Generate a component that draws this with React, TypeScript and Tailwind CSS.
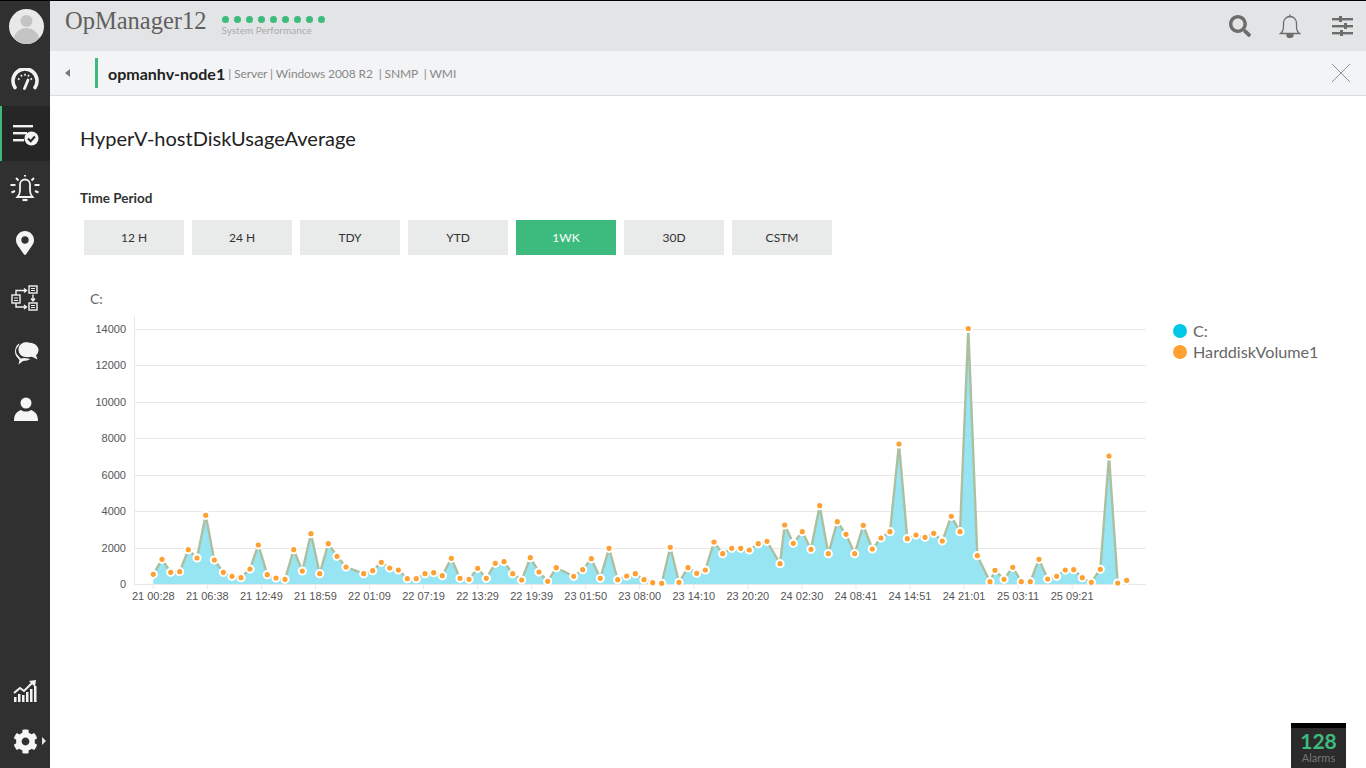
import { FaCog, FaMapMarkerAlt, FaSearch } from "react-icons/fa";

// [x, y] of each sample in page pixels, the svg viewBox starts at 90,310
const points: [number, number][] = [
  [153.3, 574.3], [162, 559.3], [170.7, 572.3], [179.7, 571.7], [188.3, 549.7], [197, 558], [205.7, 515.3], [214.3, 560],
  [223.3, 572.3], [232, 576.3], [241, 577.7], [250, 569], [258.3, 545], [267.3, 574.7], [276, 578], [285, 579.3],
  [293.7, 549.7], [302.3, 571], [311, 533.7], [319.7, 573.7], [328.3, 543.7], [337, 556.3], [346, 567], [363.7, 573.7],
  [372.7, 570.7], [381.3, 562.3], [389.7, 568], [398.3, 570], [407.3, 578.7], [416.3, 578.7], [425, 573.7], [433.7, 572.7],
  [442.3, 575.7], [451.3, 558.3], [460, 578.3], [469, 579.3], [477.7, 568.3], [486.3, 578.3], [495.3, 563.3], [504, 561.7],
  [512.7, 573.7], [521.7, 580], [530.3, 557.7], [539, 572], [547.7, 581.3], [556.3, 567.7], [573.7, 576.3], [582.7, 569.7],
  [591.3, 558.7], [600.3, 578.3], [609, 548.3], [617.7, 579.7], [626.7, 576], [635.3, 573.7], [644, 579.7], [652.7, 582.7],
  [661.7, 583.3], [670.3, 547.3], [679, 582.3], [688, 567.7], [696.7, 573.3], [705.3, 570], [714, 542], [722.7, 553.7],
  [731.7, 548.3], [740.7, 548.3], [749.3, 550], [758.3, 543.7], [767, 541.3], [780, 563.7], [784.7, 525], [793.3, 543.3],
  [802.3, 531.7], [811, 549.3], [819.7, 505.7], [828.3, 553.7], [837.3, 521.7], [846, 534.3], [854.7, 553.7], [863.3, 525.3],
  [872.3, 549], [881, 538], [890, 531.7], [899, 444], [907.3, 538.7], [916, 535], [925, 537.3], [933.7, 533.3],
  [942.3, 541], [951.3, 516.3], [960, 531.7], [968.3, 328.5], [977.3, 555.7], [990, 581.7], [995, 570.3], [1004, 579.3],
  [1012.7, 567.3], [1021.3, 581.7], [1030.3, 581.7], [1039, 559.3], [1047.7, 579], [1056.7, 576.3], [1065.3, 570], [1073.7, 569.7],
  [1082.3, 577.7], [1091.3, 582.3], [1100.3, 569.3], [1109, 456], [1117.7, 583],
];
const lastDot: [number, number] = [1126.7, 580.3];

const xLabels = [
  "21 00:28", "21 06:38", "21 12:49", "21 18:59", "22 01:09", "22 07:19", "22 13:29", "22 19:39", "23 01:50",
  "23 08:00", "23 14:10", "23 20:20", "24 02:30", "24 08:41", "24 14:51", "24 21:01", "25 03:11", "25 09:21",
];
const yLabels = [0, 2000, 4000, 6000, 8000, 10000, 12000, 14000];
const periods = ["12 H", "24 H", "TDY", "YTD", "1WK", "30D", "CSTM"];

function Chart() {
  const line = points.map((p) => p.join(",")).join(" ");
  const area = `153.3,584 ${line} 1117.7,584`;
  return (
    <svg width="1060" height="300" viewBox="90 310 1060 300" className="shrink-0">
      <path d="M134.5 316V584" stroke="#e6e6e6" />
      {yLabels.map((v, i) => {
        const y = Math.round(584 - i * 36.45) + 0.5;
        return (
          <g key={v}>
            <path d={`M134 ${y}H1146`} stroke="#e8e8e8" />
            <text x="126" y={y + 3.5} textAnchor="end" fontSize="11" fill="#555" fontFamily="'Liberation Sans', sans-serif">
              {v}
            </text>
          </g>
        );
      })}
      {xLabels.map((l, i) => {
        const x = 153.3 + i * 54.05;
        return (
          <g key={l}>
            <path d={`M${x} 584V589`} stroke="#e6e6e6" />
            <text x={x} y="600" textAnchor="middle" fontSize="11" fill="#555" fontFamily="'Liberation Sans', sans-serif">
              {l}
            </text>
          </g>
        );
      })}
      <polygon points={area} fill="#97e5f2" />
      <polyline points={line} fill="none" stroke="#acc0a0" strokeWidth="2.4" />
      {[...points, lastDot].map(([x, y]) => (
        <circle key={x} cx={x} cy={y} r="3.6" fill="#ffa033" stroke="#fff" strokeWidth="2" />
      ))}
    </svg>
  );
}

function NavItem({ active, children }: { active?: boolean; children: React.ReactNode }) {
  return (
    <div
      className={`flex h-[55px] items-center justify-center ${active ? "border-l-2 border-[#3dbb7e] bg-[#262626]" : ""}`}
    >
      {children}
    </div>
  );
}

export default function App() {
  return (
    <div className="flex h-[768px] w-[1366px] overflow-hidden border-t border-black bg-white font-['Lato',sans-serif]">
      {/* sidebar */}
      <aside className="flex w-[50px] shrink-0 flex-col bg-[#303030]">
        <div className="flex h-[50px] items-center justify-center pl-[2px]">
          <svg width="35" height="35" viewBox="0 0 35 35">
            <defs>
              <clipPath id="av">
                <circle cx="17.5" cy="17.5" r="17.5" />
              </clipPath>
            </defs>
            <circle cx="17.5" cy="17.5" r="17.5" fill="#e9e9e9" />
            <g clipPath="url(#av)" fill="#c4c4c4">
              <circle cx="17.5" cy="12" r="6" />
              <ellipse cx="17.5" cy="32" rx="13" ry="13" />
            </g>
          </svg>
        </div>
        <NavItem>
          <svg width="28" height="22" viewBox="0 0 28 22" fill="none" stroke="#f2f2f2">
            <path d="M4 19.500A12 12 0 1 1 24 19.500" strokeWidth="3.600" strokeLinecap="round" />
            <path d="M7 10.500l1.500 1M10 7l1 1.500M14 5.800v2M18 7l-1 1.500M21 10.500l-1.500 1" strokeWidth="1.600" />
            <path d="M13.500 20.500L17 12" strokeWidth="2.800" strokeLinecap="round" />
          </svg>
        </NavItem>
        <NavItem active>
          <svg width="26" height="22" viewBox="0 0 26 22" className="mt-1" fill="#f2f2f2">
            <rect x="0" y="0" width="20" height="2.400" />
            <rect x="0" y="7" width="14" height="2.400" />
            <rect x="0" y="14" width="11" height="2.400" />
            <circle cx="18.500" cy="13.500" r="7" />
            <path d="M15 13.500l2.700 2.700 4.200-4.700" fill="none" stroke="#262626" strokeWidth="2" />
          </svg>
        </NavItem>
        <NavItem>
          <svg width="30" height="27" viewBox="0 0 30 27" fill="none" stroke="#f2f2f2" strokeWidth="1.800">
            <path d="M7.500 22h15c-1.800-1.800-2.500-3.500-2.500-6.500V9.500a5 5 0 0 0-10 0v6c0 3-.7 4.700-2.500 6.500z" />
            <path d="M12.500 25h5" strokeWidth="2.200" />
            <path d="M6 3l2.500 2.500M24 3l-2.500 2.500M15 0v1.500M0.500 10h5M24.500 10h5M1.500 17.500l3.500-1.500M28.500 17.500l-3.500-1.500" strokeWidth="2" />
          </svg>
        </NavItem>
        <NavItem>
          <FaMapMarkerAlt size={24} color="#f4f4f4" className="-mt-[2px]" />
        </NavItem>
        <NavItem>
          <svg width="28" height="27" viewBox="0 0 28 27" fill="none" stroke="#f2f2f2" strokeWidth="1.400">
            <rect x="1" y="10" width="8" height="8" />
            <rect x="18" y="1" width="8" height="7" />
            <rect x="18" y="18" width="8" height="7" />
            <path d="M3 13h4M3 15.500h4M20 3.500h4M20 5.500h4M20 20.500h4M20 22.500h4" strokeWidth="1" />
            <path d="M5 10V5.500h10M13 3.500l2.500 2-2.500 2M5 18v4h10M13 20l2.500 2-2.500 2M22 9.500v6M20 13.500l2 2.500 2-2.500" />
          </svg>
        </NavItem>
        <NavItem>
          <svg width="26" height="24" viewBox="0 0 26 24" fill="#f4f4f4" className="ml-[2px]">
            <path d="M3.500 14.500C.5 10 2.500 3 6.500 1.500l-1 2.500c-3.500 3-3 7.500 0 10l2 2.500 4-.5 6 1-3.500 1.500-4 .5-4.500 3.500 1-4.500z" />
            <path d="M14.500 .5c6.500 0 11 3 11 7.500 0 2.200-1 4-2.500 5.200l1.500 4.300-5.500-2.800c-1.500.3-3 .5-4.500.5-5.500 0-9-3-9-7.500s3.500-7.700 9-7.700z" />
          </svg>
        </NavItem>
        <NavItem>
          <svg width="24" height="24" viewBox="0 0 24 24" fill="#f6f6f6" className="ml-[1px]">
            <circle cx="12" cy="6" r="5.500" />
            <path d="M0 24c0-6 2-9 7-11 3 2 7 2 10 0 5 2 7 5 7 11z" />
          </svg>
        </NavItem>
        <div className="mt-auto flex h-[52px] items-center justify-center">
          <svg width="24" height="22" viewBox="0 0 24 22" fill="#f2f2f2">
            <rect x="1" y="17" width="2.500" height="5" />
            <rect x="5" y="14" width="2.500" height="8" />
            <rect x="9" y="15" width="2.500" height="7" />
            <rect x="13" y="12" width="2.500" height="10" />
            <rect x="17" y="9" width="2.500" height="13" />
            <rect x="21" y="6" width="2.500" height="16" />
            <path d="M1 13l6-5 4 3 8-8" fill="none" stroke="#f2f2f2" strokeWidth="2" />
            <path d="M16 1l7-1-1 7z" />
          </svg>
        </div>
        <div className="relative mb-[2px] flex h-[49px] items-center justify-center">
          <FaCog size={25} color="#f6f6f6" />
          <span className="absolute right-[4px] top-[20px] h-0 w-0 border-y-[4px] border-l-[4px] border-y-transparent border-l-[#e8e8e8]" />
        </div>
      </aside>

      {/* main */}
      <div className="flex min-w-0 flex-1 flex-col">
        <header className="flex h-[50px] shrink-0 items-center bg-[#e3e4e5] pl-[15px] pr-[13px]">
          <span className="mb-[9px] font-['Liberation_Serif',serif] text-[24.500px] leading-none text-[#606060]">
            OpManager12
          </span>
          <div className="ml-[15px] flex flex-col">
            <div className="flex gap-[5px]">
              {[0, 1, 2, 3, 4, 5, 6, 7, 8].map((d) => (
                <span key={d} className="size-[7px] rounded-full bg-[#3dbb7e]" />
              ))}
            </div>
            <span className="mt-[1px] text-[10px] leading-[12px] text-[#aaa]">System Performance</span>
          </div>
          <div className="ml-auto flex items-center gap-[28px] text-[#6d6d6d]">
            <FaSearch size={22} />
            <svg width="22" height="24" viewBox="0 0 22 24" fill="none" stroke="#6d6d6d" strokeWidth="1.300">
              <path d="M1.500 19.500c2-1.500 3-3.500 3-7V9a6.500 6.500 0 0 1 13 0v3.500c0 3.500 1 5.500 3 7z" />
              <path d="M11 .5v2" />
              <path d="M8 20h6v1.500a3 2 0 0 1-6 0z" fill="#6d6d6d" />
            </svg>
            <svg width="21" height="20" viewBox="0 0 21 20" fill="#6d6d6d" className="ml-[3px]">
              <rect y="2" width="21" height="2.400" />
              <rect y="9" width="21" height="2.400" />
              <rect y="16" width="21" height="2.400" />
              <rect x="7" width="3" height="6" />
              <rect x="12" y="7" width="3" height="6" />
              <rect x="8" y="14" width="3" height="6" />
            </svg>
          </div>
        </header>
        <div className="flex h-[45px] shrink-0 items-center border-b border-[#dcdcdc] bg-[#f3f4f5] pr-[16px]">
          <span className="ml-[15px] h-0 w-0 border-y-[4px] border-r-[5px] border-y-transparent border-r-[#777]" />
          <span className="ml-[25px] h-[30px] w-[3px] bg-[#3dbb7e]" />
          <span className="ml-[10px] mt-[1px] text-[16px] font-bold text-[#222]">opmanhv-node1</span>
          <span className="ml-[3px] mt-[1px] text-[12px] tracking-[-0.1px] text-[#888]">
            | Server | Windows 2008 R2 &nbsp;| SNMP &nbsp;| WMI
          </span>
          <svg width="18" height="18" viewBox="0 0 18 18" className="ml-auto" stroke="#777" strokeWidth="0.800">
            <path d="M0 0L18 18M18 0L0 18" />
          </svg>
        </div>
        <main className="flex-1 pl-[30px]">
          <h1 className="mt-[28px] text-[20px] leading-[28px] text-[#222]">HyperV-hostDiskUsageAverage</h1>
          <div className="mt-[37px] text-[13.500px] font-bold leading-[18px] text-[#333]">Time Period</div>
          <div className="ml-[4px] mt-[13px] flex gap-[8px]">
            {periods.map((p) => (
              <div
                key={p}
                className={`flex h-[35px] w-[100px] items-center justify-center text-[12px] ${
                  p === "1WK" ? "bg-[#3dbb7e] text-white" : "bg-[#e9eaea] text-[#333]"
                }`}
              >
                {p}
              </div>
            ))}
          </div>
          <div className="ml-[10px] mt-[35px] text-[14px] leading-[18px] text-[#666]">C:</div>
          <div className="mt-[2px] flex">
            <div className="ml-[10px]">
              <Chart />
            </div>
            <div className="ml-[23px] mt-[10px] text-[16.200px] leading-[21px] text-[#666]">
              <div className="flex items-center gap-[6px]">
                <span className="size-[14px] rounded-full bg-[#00c8e6]" />
                C:
              </div>
              <div className="flex items-center gap-[6px]">
                <span className="size-[14px] rounded-full bg-[#ffa033]" />
                HarddiskVolume1
              </div>
            </div>
          </div>
        </main>
      </div>

      {/* alarm counter lies over the page corner */}
      <div className="absolute bottom-0 right-[20px] h-[45px] w-[55px] border-t-[5px] border-black bg-[#2b2b2b] text-center">
        <div className="mt-[1px] text-[21px] font-bold leading-[23px] text-[#3dbb7e]">128</div>
        <div className="text-[11px] leading-[12px] text-[#777]">Alarms</div>
      </div>
    </div>
  );
}
